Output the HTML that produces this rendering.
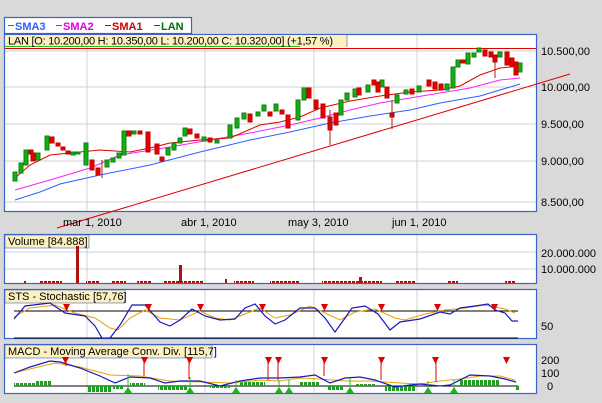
<!DOCTYPE html><html><head><meta charset="utf-8"><style>
body{margin:0;background:#d9d9d9;width:602px;height:403px;overflow:hidden;font-family:"Liberation Sans",sans-serif}
svg{position:absolute;left:0;top:0}
text{font-family:"Liberation Sans",sans-serif;font-size:11px;fill:#000}
.g{stroke:#d0d0d0;stroke-width:1}
.b{fill:#fff;stroke:#3a62c8;stroke-width:1.2}
</style></head><body>
<svg width="602" height="403" viewBox="0 0 602 403">
<defs>
<pattern id="hg" width="4" height="10" patternUnits="userSpaceOnUse"><rect width="3" height="10" fill="#20a020"/></pattern>
<pattern id="vr" width="4" height="10" patternUnits="userSpaceOnUse"><rect width="3" height="10" fill="#b01010"/></pattern>
</defs>
<rect x="4.5" y="17.5" width="187" height="16" class="b"/>
<g font-weight="bold" font-size="11">
<line x1="8" y1="25.5" x2="14" y2="25.5" stroke="#3060ff"/><text x="15" y="30" style="fill:#3060ff;font-weight:bold">SMA3</text>
<line x1="56" y1="25.5" x2="62" y2="25.5" stroke="#e000e0"/><text x="63" y="30" style="fill:#e000e0;font-weight:bold">SMA2</text>
<line x1="105" y1="25.5" x2="111" y2="25.5" stroke="#e00000"/><text x="112" y="30" style="fill:#d00000;font-weight:bold">SMA1</text>
<line x1="154" y1="25.5" x2="160" y2="25.5" stroke="#007000"/><text x="161" y="30" style="fill:#007000;font-weight:bold">LAN</text>
</g>
<rect x="4.5" y="34.5" width="532" height="177" class="b"/>
<g class="g"><line x1="5" y1="51" x2="536" y2="51"/><line x1="5" y1="87" x2="536" y2="87"/><line x1="5" y1="124" x2="536" y2="124"/><line x1="5" y1="161" x2="536" y2="161"/><line x1="5" y1="202" x2="536" y2="202"/>
<line x1="87" y1="47" x2="87" y2="211"/><line x1="205" y1="47" x2="205" y2="211"/><line x1="314" y1="35" x2="314" y2="211"/><line x1="417" y1="35" x2="417" y2="211"/></g>
<rect x="5" y="35" width="342" height="12" fill="#fdf0c0"/>
<line x1="5" y1="46.5" x2="300" y2="46.5" stroke="#20c020"/>
<line x1="347" y1="35" x2="347" y2="47" stroke="#999"/>
<text x="8" y="44.5" textLength="325">LAN [O: 10.200,00  H: 10.350,00  L: 10.200,00  C: 10.320,00] (+1,57 %)</text>
<line x1="5" y1="48.5" x2="536" y2="48.5" stroke="#e00000"/>
<g fill="none" stroke-width="1">
<polyline stroke="#3060ff" points="15,200 40,192 60,184 100,175 150,165 200,152 250,140 290,132 330,123 370,116 410,110 440,103 480,96 520,84"/>
<polyline stroke="#ff20ff" points="15,190 50,180 90,168 120,155 170,147 210,140 250,133 290,125 320,118 350,110 380,103 410,98 440,93 470,88 500,80 520,78"/>
<polyline stroke="#e00000" points="15,178 30,165 50,155 80,152 100,150 130,152 150,148 170,143 200,140 230,138 260,125 280,122 300,117 320,108 350,101 380,96 410,92 440,90 460,86 480,75 500,68 520,66"/>
<line x1="57" y1="228" x2="570" y2="74" stroke="#e00000"/>
</g>
<g stroke-width="1">
<g fill="#10b010" stroke="#108010">
<rect x="13" y="172" width="4" height="9"/><rect x="19" y="163" width="4" height="10"/><rect x="24" y="150" width="4" height="15"/><rect x="36" y="153" width="4" height="7"/><rect x="45" y="136" width="4" height="14"/>
<rect x="71" y="152" width="4" height="3"/><rect x="76" y="152" width="4" height="2"/><rect x="84" y="143" width="4" height="22"/><rect x="105" y="160" width="4" height="7"/><rect x="111" y="158" width="4" height="4"/><rect x="117" y="153" width="4" height="5"/>
<rect x="122" y="131" width="4" height="24"/><rect x="132" y="131" width="4" height="3"/><rect x="166" y="148" width="4" height="7"/><rect x="172" y="143" width="4" height="7"/><rect x="178" y="138" width="4" height="5"/><rect x="183" y="128" width="4" height="8"/>
<rect x="202" y="137" width="4" height="4"/><rect x="215" y="140" width="4" height="3"/><rect x="228" y="125" width="4" height="13"/><rect x="235" y="118" width="4" height="10"/><rect x="242" y="113" width="4" height="6"/><rect x="256" y="112" width="4" height="4"/><rect x="262" y="105" width="4" height="6"/><rect x="274" y="104" width="4" height="7"/>
<rect x="296" y="100" width="4" height="20"/><rect x="302" y="88" width="4" height="12"/><rect x="339" y="100" width="4" height="15"/><rect x="345" y="93" width="4" height="7"/><rect x="353" y="89" width="4" height="8"/><rect x="366" y="85" width="4" height="7"/><rect x="380" y="80" width="4" height="7"/>
<rect x="395" y="95" width="4" height="8"/><rect x="404" y="90" width="4" height="4"/><rect x="417" y="86" width="4" height="6"/><rect x="445" y="84" width="4" height="6"/><rect x="451" y="67" width="4" height="21"/><rect x="456" y="60" width="4" height="7"/><rect x="466" y="53" width="4" height="11"/><rect x="472" y="53" width="4" height="4"/><rect x="477" y="48" width="4" height="4"/><rect x="498" y="52" width="4" height="5"/><rect x="518" y="63" width="4" height="9"/>
</g>
<g fill="#e80000" stroke="#c00000">
<rect x="29" y="150" width="4" height="4"/><rect x="31" y="153" width="4" height="8"/><rect x="50" y="137" width="4" height="6"/><rect x="56" y="143" width="4" height="3"/><rect x="61" y="147" width="4" height="3"/><rect x="66" y="151" width="4" height="3"/>
<rect x="90" y="160" width="4" height="10"/><rect x="96" y="168" width="4" height="7"/><rect x="127" y="131" width="4" height="5"/><rect x="138" y="131" width="4" height="3"/><rect x="146" y="132" width="4" height="20"/><rect x="155" y="144" width="4" height="10"/><rect x="160" y="157" width="4" height="4"/>
<rect x="188" y="129" width="4" height="5"/><rect x="195" y="134" width="4" height="4"/><rect x="208" y="138" width="4" height="4"/><rect x="248" y="114" width="4" height="8"/><rect x="268" y="112" width="4" height="4"/><rect x="280" y="110" width="4" height="4"/><rect x="286" y="115" width="4" height="13"/>
<rect x="307" y="88" width="4" height="10"/><rect x="314" y="100" width="4" height="9"/><rect x="321" y="104" width="4" height="14"/><rect x="328" y="117" width="4" height="13"/><rect x="334" y="113" width="4" height="12"/><rect x="357" y="88" width="4" height="7"/><rect x="372" y="80" width="4" height="5"/><rect x="376" y="82" width="4" height="10"/><rect x="385" y="87" width="4" height="11"/><rect x="390" y="113" width="4" height="4"/>
<rect x="410" y="89" width="4" height="5"/><rect x="427" y="80" width="4" height="6"/><rect x="433" y="82" width="4" height="7"/><rect x="439" y="84" width="4" height="6"/><rect x="461" y="60" width="4" height="3"/><rect x="483" y="50" width="4" height="6"/><rect x="489" y="52" width="4" height="5"/><rect x="493" y="55" width="4" height="7"/><rect x="505" y="52" width="4" height="13"/><rect x="510" y="58" width="4" height="8"/><rect x="514" y="62" width="4" height="13"/>
</g>
<g stroke="#a02020"><line x1="330" y1="110" x2="330" y2="145"/><line x1="392" y1="100" x2="392" y2="129"/><line x1="495" y1="60" x2="495" y2="78"/><line x1="102" y1="160" x2="102" y2="178"/></g>
</g>
<g><text x="541" y="55">10.500,00</text><text x="541" y="91">10.000,00</text><text x="541" y="128">9.500,00</text><text x="541" y="165">9.000,00</text><text x="541" y="206">8.500,00</text>
<text x="63" y="226">mar 1, 2010</text><text x="181" y="226">abr 1, 2010</text><text x="288" y="226">may 3, 2010</text><text x="392" y="226">jun 1, 2010</text></g>
<rect x="4.5" y="234.5" width="532" height="49" class="b"/>
<g class="g"><line x1="5" y1="252" x2="536" y2="252"/><line x1="5" y1="269" x2="536" y2="269"/><line x1="87" y1="246" x2="87" y2="283"/><line x1="205" y1="235" x2="205" y2="283"/><line x1="314" y1="235" x2="314" y2="283"/><line x1="417" y1="235" x2="417" y2="283"/></g>
<rect x="5" y="235" width="84" height="13" fill="#fdf0c0" stroke="#3a62c8" stroke-width=".6"/>
<text x="8" y="245">Volume [84.888]</text>
<g fill="#b01010"><rect x="76" y="246" width="3" height="37"/><rect x="179" y="265" width="3" height="18"/><rect x="359" y="277" width="3" height="6"/><rect x="225" y="279" width="2" height="4"/></g>
<g fill="url(#vr)"><rect x="24" y="281" width="2" height="2"/><rect x="40" y="281" width="22" height="2"/><rect x="86" y="281" width="14" height="2"/><rect x="112" y="281" width="14" height="2"/><rect x="137" y="281" width="14" height="2"/><rect x="163" y="281" width="40" height="2"/><rect x="234" y="281" width="20" height="2"/><rect x="270" y="281" width="30" height="2"/><rect x="322" y="281" width="60" height="2"/><rect x="395" y="281" width="20" height="2"/><rect x="448" y="281" width="10" height="2"/><rect x="505" y="281" width="10" height="2"/></g>
<text x="541" y="257">20.000.000</text><text x="541" y="273">10.000.000</text>
<rect x="4.5" y="289.5" width="532" height="49" class="b"/>
<g class="g"><line x1="87" y1="303" x2="87" y2="338"/><line x1="205" y1="290" x2="205" y2="338"/><line x1="314" y1="290" x2="314" y2="338"/><line x1="417" y1="290" x2="417" y2="338"/></g>
<rect x="5" y="290" width="120" height="13" fill="#fdf0c0" stroke="#3a62c8" stroke-width=".6"/>
<text x="8" y="300">STS - Stochastic [57,76]</text>
<line x1="14" y1="311" x2="518" y2="311" stroke="#000"/><line x1="14" y1="338" x2="518" y2="338" stroke="#000"/>
<polyline fill="none" stroke="#e8a000" points="14,317 30,308 55,305 75,313 95,318 110,328 118,330 130,318 145,310 160,318 180,320 200,311 215,318 230,320 250,312 260,308 275,318 290,315 310,306 325,313 340,320 355,312 375,309 395,318 405,320 425,314 445,310 465,308 485,305 505,309 515,313"/>
<polyline fill="none" stroke="#1818c0" stroke-width="1.2" points="14,319 25,306 50,303 65,313 85,316 95,326 102,338 110,338 120,325 132,305 145,305 160,322 170,326 180,320 192,309 205,316 220,320 235,319 245,308 255,304 265,316 275,324 285,320 300,308 315,308 325,318 335,332 345,318 352,308 365,306 378,314 390,330 400,322 420,319 440,312 450,314 460,308 475,306 488,304 495,310 505,313 512,321 518,321"/>
<g fill="#e00000"><path d="M63,304h7l-3.5,7z"/><path d="M145,304h7l-3.5,7z"/><path d="M197,304h7l-3.5,7z"/><path d="M259,304h7l-3.5,7z"/><path d="M321,304h7l-3.5,7z"/><path d="M378,304h7l-3.5,7z"/><path d="M434,304h7l-3.5,7z"/><path d="M491,304h7l-3.5,7z"/></g>
<text x="541" y="330">50</text>
<rect x="4.5" y="344.5" width="532" height="49" class="b"/>
<g class="g"><line x1="87" y1="358" x2="87" y2="393"/><line x1="205" y1="345" x2="205" y2="393"/><line x1="314" y1="345" x2="314" y2="393"/><line x1="417" y1="345" x2="417" y2="393"/></g>
<rect x="5" y="345" width="207" height="13" fill="#fdf0c0" stroke="#3a62c8" stroke-width=".6"/>
<text x="8" y="355">MACD - Moving Average Conv. Div. [115,7]</text>
<line x1="14" y1="386" x2="518" y2="386" stroke="#000"/>
<g fill="url(#hg)"><rect x="14" y="383" width="38" height="3"/><rect x="36" y="381" width="16" height="5"/><rect x="87" y="386" width="25" height="6"/><rect x="113" y="386" width="10" height="3"/><rect x="130" y="383" width="15" height="3"/><rect x="158" y="386" width="30" height="4"/><rect x="210" y="386" width="20" height="2"/><rect x="240" y="382" width="25" height="4"/><rect x="300" y="382" width="20" height="4"/><rect x="328" y="386" width="15" height="4"/><rect x="355" y="384" width="20" height="2"/><rect x="385" y="386" width="30" height="5"/><rect x="460" y="380" width="40" height="6"/><rect x="515" y="386" width="4" height="4"/></g>
<polyline fill="none" stroke="#e8a000" points="14,373 30,369 55,363 80,367 110,375 140,376 170,381 200,382 230,383 260,380 280,381 300,378 320,379 345,381 370,381 400,383 420,384 440,381 460,379 480,376 500,376 515,380"/>
<polyline fill="none" stroke="#1818c0" stroke-width="1.2" points="14,373 30,367 50,361 60,362 80,368 100,376 115,383 130,377 150,378 165,383 180,381 200,381 220,386 240,381 260,378 280,378 300,377 315,375 330,383 345,378 360,377 375,380 395,387 410,385 420,384 440,386 450,385 470,375 490,376 505,379 516,382"/>
<g stroke="#e00000"><line x1="66" y1="360" x2="66" y2="366"/><line x1="144" y1="360" x2="144" y2="376"/><line x1="189" y1="360" x2="189" y2="379"/><line x1="268" y1="360" x2="268" y2="380"/><line x1="278" y1="360" x2="278" y2="380"/><line x1="324" y1="360" x2="324" y2="376"/><line x1="381" y1="360" x2="381" y2="380"/><line x1="436" y1="360" x2="436" y2="382"/></g>
<g fill="#e00000"><path d="M62,357h7l-3.5,7z"/><path d="M141,357h7l-3.5,7z"/><path d="M186,357h7l-3.5,7z"/><path d="M265,357h7l-3.5,7z"/><path d="M275,357h7l-3.5,7z"/><path d="M321,357h7l-3.5,7z"/><path d="M378,357h7l-3.5,7z"/><path d="M432,357h7l-3.5,7z"/><path d="M503,357h7l-3.5,7z"/></g>
<g stroke="#20c020"><line x1="128" y1="374" x2="128" y2="392"/><line x1="190" y1="377" x2="190" y2="392"/><line x1="236" y1="380" x2="236" y2="392"/><line x1="279" y1="380" x2="279" y2="392"/><line x1="289" y1="380" x2="289" y2="392"/><line x1="350" y1="378" x2="350" y2="392"/><line x1="428" y1="381" x2="428" y2="392"/><line x1="454" y1="380" x2="454" y2="392"/></g>
<g fill="#20b020"><path d="M124,393h8l-4,-6z"/><path d="M186,393h8l-4,-6z"/><path d="M232,393h8l-4,-6z"/><path d="M275,393h8l-4,-6z"/><path d="M285,393h8l-4,-6z"/><path d="M346,393h8l-4,-6z"/><path d="M424,393h8l-4,-6z"/><path d="M450,393h8l-4,-6z"/></g>
<text x="541" y="364">200</text><text x="541" y="377">100</text><text x="547" y="390">0</text>
</svg>
</body></html>
